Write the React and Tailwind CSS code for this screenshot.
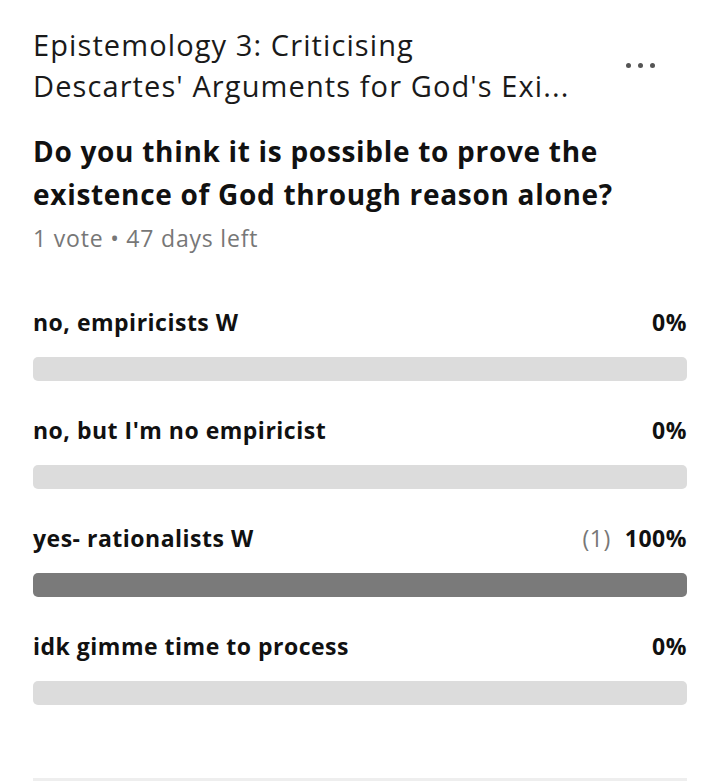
export default function App() {
  const options = [
    { label: "no, empiricists W", pct: 0 },
    { label: "no, but I'm no empiricist", pct: 0 },
    { label: "yes- rationalists W", pct: 100, count: 1 },
    { label: "idk gimme time to process", pct: 0 },
  ];
  return (
    <div className="w-[720px] h-[781px] bg-white overflow-hidden px-[33px] text-[#111]" style={{ fontFamily: "'Open Sans', sans-serif" }}>
      <div className="flex items-start justify-between pt-[24px]">
        <div className="text-[29px] leading-[41px] text-[#1a1a1a] tracking-[1.1px] whitespace-nowrap">
          <div>Epistemology 3: Criticising</div>
          <div>Descartes' Arguments for God's Exi...</div>
        </div>
        <div className="flex gap-[7px] mt-[39px] mr-[32px]">
          <span className="w-[5px] h-[5px] rounded-full bg-[#555]" />
          <span className="w-[5px] h-[5px] rounded-full bg-[#555]" />
          <span className="w-[5px] h-[5px] rounded-full bg-[#555]" />
        </div>
      </div>
      <div className="mt-[24px] text-[28px] leading-[43px] font-bold text-[#111] tracking-[0.7px] whitespace-nowrap">
        Do you think it is possible to prove the<br />existence of God through reason alone?
      </div>
      <div className="mt-[7px] text-[23px] leading-[30px] text-[#777] tracking-[0.8px]">1 vote • 47 days left</div>
      <div className="mt-[55px] flex flex-col gap-[35px]">
        {options.map((o, i) => (
          <div key={i} className="flex flex-col gap-[21px]">
            <div className="flex justify-between items-center text-[23px] leading-[28px] font-bold tracking-[0.5px]">
              <span>{o.label}</span>
              <span className="flex items-center gap-[14px]">
                {o.count != null && <span className="font-normal text-[#777]">({o.count})</span>}
                <span>{o.pct}%</span>
              </span>
            </div>
            <div className="h-[24px] rounded-[5px] bg-[#dcdcdc] overflow-hidden">
              <div className="h-full bg-[#7a7a7a]" style={{ width: `${o.pct}%` }} />
            </div>
          </div>
        ))}
      </div>
      <div className="mt-[73px] h-[3px] bg-[#eeeeee]" />
    </div>
  );
}
